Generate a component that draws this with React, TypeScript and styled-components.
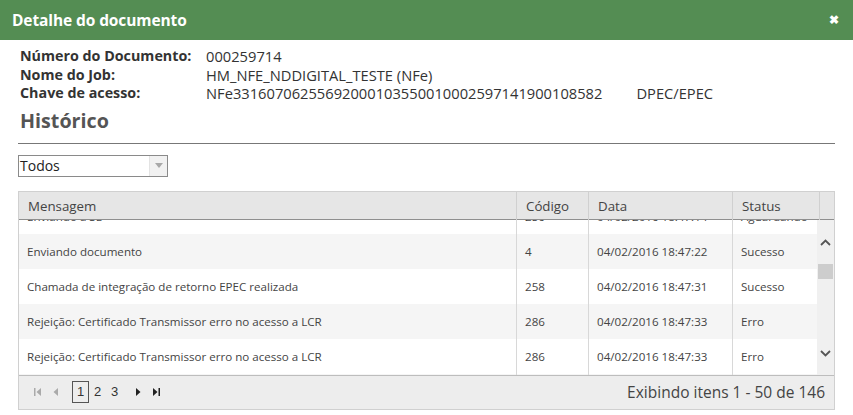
import React, { useEffect, useRef } from 'react';
import styled, { createGlobalStyle } from 'styled-components';

const GlobalStyle = createGlobalStyle`
    html, body {
        margin: 0;
        padding: 0;
        background: #fff;
        font-family: "Open Sans", "Liberation Sans", sans-serif;
        color: #333;
    }
`;

const Modal = styled.div`
    width: 853px;
    height: 415px;
    display: flex;
    flex-direction: column;
    overflow: hidden;
`;

const TitleBar = styled.div`
    height: 40px;
    background: #548d53;
    display: flex;
    align-items: center;
    justify-content: space-between;
    padding: 0 12px 0 12px;
    .title {
        color: #fff;
        font-weight: 700;
        font-size: 15.5px;
        letter-spacing: -0.1px;
    }
    .close {
        color: #fff;
        font-weight: 700;
        font-size: 12px;
        line-height: 1;
        margin-right: 2px;
    }
`;

const Body = styled.div`
    padding: 6px 18px 0 18px;
    display: flex;
    flex-direction: column;
`;

const InfoList = styled.div`
    display: grid;
    grid-template-columns: 186px auto;
    padding-left: 2px;
    padding-top: 1px;
    font-size: 14.7px;
    line-height: 18.5px;
    .label {
        font-weight: 700;
        color: #333;
        font-size: 14.3px;
    }
    .value {
        color: #333;
        display: flex;
        gap: 34px;
    }
`;

const SectionTitle = styled.div`
    font-size: 19.7px;
    font-weight: 700;
    color: #555;
    padding: 4px 0 9px 2px;
    border-bottom: 1px solid #777;
`;

const Select = styled.div`
    margin-top: 11px;
    width: 148px;
    height: 20px;
    border: 1px solid #8a8a8a;
    display: flex;
    align-items: stretch;
    font-size: 14px;
    .text {
        flex: 1;
        padding-left: 1px;
        line-height: 20px;
        color: #222;
    }
    .arrow {
        width: 17px;
        background: #f1f1f1;
        border-left: 1px solid #e3e3e3;
        display: flex;
        align-items: center;
        justify-content: center;
    }
`;

const Grid = styled.div`
    margin-top: 14px;
    border: 1px solid #d0d0d0;
    display: flex;
    flex-direction: column;
`;

const columns = '497px 72px 144px 87px 1fr';

const HeaderRow = styled.div`
    display: grid;
    grid-template-columns: ${columns};
    height: 27px;
    background: #e6e6e6;
    border-bottom: 1px solid #8f8f8f;
    font-size: 13.3px;
    color: #444;
`;

const HeaderCell = styled.div`
    padding-left: 9px;
    line-height: 28px;
    border-left: 1px solid #d0d0d0;
    &:first-child {
        border-left: none;
    }
`;

const Content = styled.div`
    display: flex;
    height: 155px;
`;

const Viewport = styled.div`
    flex: 1;
    overflow: hidden;
`;

const Row = styled.div<{ $alt?: boolean }>`
    display: grid;
    grid-template-columns: 497px 72px 144px 87px;
    height: 35px;
    background: ${p => (p.$alt ? '#f5f5f5' : '#fff')};
    font-size: 11.6px;
    color: #444;
`;

const Cell = styled.div`
    padding-left: 8px;
    line-height: 36px;
    white-space: nowrap;
    overflow: hidden;
    border-left: 1px solid #d8d8d8;
    &:first-child {
        border-left: none;
    }
`;

const Scrollbar = styled.div`
    width: 17px;
    background: #f0f0f0;
    display: flex;
    flex-direction: column;
    align-items: center;
    .up, .down {
        display: flex;
        height: 7px;
    }
    .up {
        margin-top: 19px;
    }
    .thumb {
        margin-top: 18px;
        width: 15px;
        height: 15px;
        background: #cdcdcd;
    }
    .down {
        margin-top: auto;
        margin-bottom: 18px;
    }
`;

const Pager = styled.div`
    height: 33px;
    background: #ededed;
    border-top: 1px solid #bdbdbd;
    display: flex;
    align-items: center;
    justify-content: space-between;
    padding: 0 9px 0 9px;
    .nav {
        display: flex;
        align-items: center;
    }
    .info {
        font-size: 15.5px;
        color: #444;
    }
`;

const NavIcon = styled.span<{ $disabled?: boolean }>`
    width: 18px;
    height: 12px;
    display: inline-flex;
    justify-content: center;
    align-items: center;
    color: ${p => (p.$disabled ? '#aaa' : '#222')};
`;

const PageNum = styled.span<{ $active?: boolean }>`
    font-size: 13px;
    font-family: "Liberation Sans", Arial, sans-serif;
    color: #333;
    width: 15px;
    height: 20px;
    line-height: 20px;
    text-align: center;
    border: 1px solid ${p => (p.$active ? '#555' : 'transparent')};
`;

const PageList = styled.div`
    display: flex;
    align-items: center;
    margin: 0 6px 0 8px;
`;

const headers = ['Mensagem', 'Código', 'Data', 'Status', ''];

const rows = [
    { msg: 'Enviando a SE', code: '256', date: '04/02/2016 18:47:14', status: 'Aguardando' },
    { msg: 'Enviando documento', code: '4', date: '04/02/2016 18:47:22', status: 'Sucesso' },
    { msg: 'Chamada de integração de retorno EPEC realizada', code: '258', date: '04/02/2016 18:47:31', status: 'Sucesso' },
    { msg: 'Rejeição: Certificado Transmissor erro no acesso a LCR', code: '286', date: '04/02/2016 18:47:33', status: 'Erro' },
    { msg: 'Rejeição: Certificado Transmissor erro no acesso a LCR', code: '286', date: '04/02/2016 18:47:33', status: 'Erro' },
    { msg: 'Rejeição: Certificado Transmissor erro no acesso a LCR', code: '286', date: '04/02/2016 18:47:34', status: 'Erro' },
];

const Chevron = ({ up }: { up?: boolean }) => (
    <svg width="11" height="7" viewBox="0 0 11 7">
        <path d={up ? 'M1 6 L5.5 1.5 L10 6' : 'M1 1 L5.5 5.5 L10 1'} fill="none" stroke="#555" strokeWidth="1.8" />
    </svg>
);

const App: React.FC = () => {
    const viewportRef = useRef<HTMLDivElement>(null);
    useEffect(() => {
        if (viewportRef.current) viewportRef.current.scrollTop = 21;
    }, []);
    return (
        <Modal>
            <GlobalStyle />
            <TitleBar>
                <span className='title'>Detalhe do documento</span>
                <span className='close'>✖</span>
            </TitleBar>
            <Body>
                <InfoList>
                    <span className='label'>Número do Documento:</span>
                    <span className='value'>000259714</span>
                    <span className='label'>Nome do Job:</span>
                    <span className='value'>HM_NFE_NDDIGITAL_TESTE (NFe)</span>
                    <span className='label'>Chave de acesso:</span>
                    <span className='value'>
                        <span>NFe33160706255692000103550010002597141900108582</span>
                        <span>DPEC/EPEC</span>
                    </span>
                </InfoList>
                <SectionTitle>Histórico</SectionTitle>
                <Select>
                    <span className='text'>Todos</span>
                    <span className='arrow'>
                        <svg width="8" height="5" viewBox="0 0 8 5"><path d="M0 0 H8 L4 5 Z" fill="#a8a8a8" /></svg>
                    </span>
                </Select>
                <Grid>
                    <HeaderRow>
                        {headers.map((h, i) => <HeaderCell key={i}>{h}</HeaderCell>)}
                    </HeaderRow>
                    <Content>
                        <Viewport ref={viewportRef}>
                            {rows.map((r, i) => (
                                <Row key={i} $alt={i % 2 === 1}>
                                    <Cell>{r.msg}</Cell>
                                    <Cell>{r.code}</Cell>
                                    <Cell>{r.date}</Cell>
                                    <Cell>{r.status}</Cell>
                                </Row>
                            ))}
                        </Viewport>
                        <Scrollbar>
                            <span className='up'><Chevron up /></span>
                            <span className='thumb' />
                            <span className='down'><Chevron /></span>
                        </Scrollbar>
                    </Content>
                    <Pager>
                        <div className='nav'>
                            <NavIcon $disabled>
                                <svg width="7" height="8" viewBox="0 0 7 8"><path d="M0 0 H1.5 V8 H0 Z M7 0 V8 L2.5 4 Z" fill="currentColor" /></svg>
                            </NavIcon>
                            <NavIcon $disabled>
                                <svg width="5" height="8" viewBox="0 0 5 8"><path d="M5 0 V8 L0.5 4 Z" fill="currentColor" /></svg>
                            </NavIcon>
                            <PageList>
                                <PageNum $active>1</PageNum>
                                <PageNum>2</PageNum>
                                <PageNum>3</PageNum>
                            </PageList>
                            <NavIcon>
                                <svg width="5" height="8" viewBox="0 0 5 8"><path d="M0 0 V8 L4.5 4 Z" fill="currentColor" /></svg>
                            </NavIcon>
                            <NavIcon>
                                <svg width="7" height="8" viewBox="0 0 7 8"><path d="M0 0 V8 L4.5 4 Z M5.5 0 H7 V8 H5.5 Z" fill="currentColor" /></svg>
                            </NavIcon>
                        </div>
                        <span className='info'>Exibindo itens 1 - 50 de 146</span>
                    </Pager>
                </Grid>
            </Body>
        </Modal>
    );
};

export default App;
